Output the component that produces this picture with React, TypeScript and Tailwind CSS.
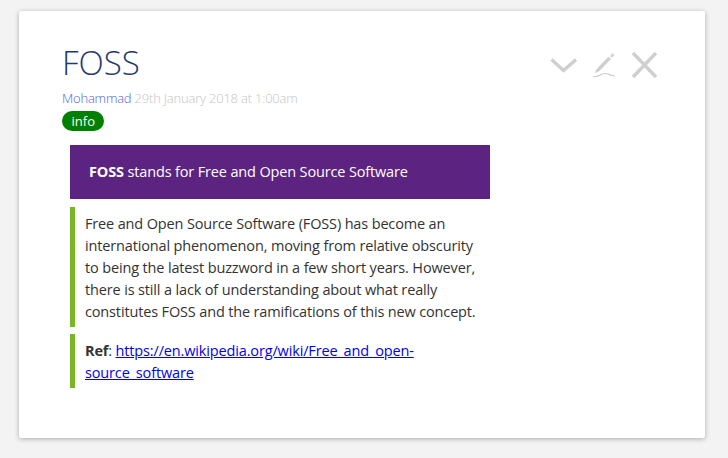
import React from 'react'

const font = { fontFamily: '"Open Sans", "Noto Sans", sans-serif' }

const Icons = () => (
  <div className="flex items-center">
    <svg width="28" height="28" viewBox="0 0 28 28" fill="none" stroke="#cfcfcf" strokeWidth="3.4">
      <path d="M2.5 8.5 L14.5 19.5 L27 8.5" />
    </svg>
    <svg className="ml-[14px]" width="24" height="28" viewBox="0 0 24 28" fill="none" stroke="#cfcfcf">
      <path d="M6 18 L4.5 21.5 L8 20 L19.5 8 L17.5 6 Z" fill="#cfcfcf" strokeWidth="0.8" />
      <path d="M19.5 5 L21.5 2.5 L23 4 L21 6.5 Z" fill="#cfcfcf" strokeWidth="0.5" />
      <path d="M2 25.5 C6 27 9 23 14 22.5 C18 22.2 19 25 24 25" strokeWidth="1.2" />
    </svg>
    <svg className="ml-[16px]" width="27" height="28" viewBox="0 0 27 28" fill="none" stroke="#cfcfcf" strokeWidth="3.4">
      <path d="M2 2 L25 26 M25 2 L2 26" />
    </svg>
  </div>
)

export default function App() {
  return (
    <div className="h-[458px] w-[728px] overflow-hidden bg-[#f3f3f3] pt-[11px] pl-[19px]" style={font}>
      <div className="relative h-[427px] w-[686px] rounded-[2px] bg-white pl-[43px] pt-[29px] shadow-[0_1px_5px_rgba(0,0,0,0.3)]">
        <div className="absolute right-[47px] top-[40px]">
          <Icons />
        </div>
        <h1 className="text-[33px] font-light leading-[46px] text-[#1f3a6e]">FOSS</h1>
        <div className="mt-[3px] text-[13px] font-light leading-[18px] tracking-[-0.2px] text-[#c4c4c4]">
          <span className="text-[#4f63d8]">Mohammad</span> 29th January 2018 at 1:00am
        </div>
        <div className="mt-[4px] flex">
          <span className="rounded-full bg-[#008000] px-[9.5px] text-[13px] leading-[20px] text-white">info</span>
        </div>
        <div className="ml-[8px] mt-[14px] w-[420px] text-[14.5px] tracking-[-0.15px] text-[#333]">
          <div className="flex h-[54px] items-center bg-[#5c2480] px-[19px] text-white">
            <p><strong className="font-bold">FOSS</strong> stands for Free and Open Source Software</p>
          </div>
          <div className="mt-[8px] border-l-[5px] border-[#7ab526] pl-[10px] pr-[10px] pt-[6px] pb-[4px] leading-[22px]">
            Free and Open Source Software (FOSS) has become an international phenomenon, moving from relative obscurity to being the latest buzzword in a few short years. However, there is still a lack of understanding about what really constitutes FOSS and the ramifications of this new concept.
          </div>
          <div className="mt-[7px] border-l-[5px] border-[#7ab526] pl-[10px] pr-[10px] pt-[6px] pb-[4px] leading-[22px]">
            <strong className="font-bold">Ref</strong>: <a href="#" className="text-[#0000ee] underline">https://en.wikipedia.org/wiki/Free_and_open-source_software</a>
          </div>
        </div>
      </div>
    </div>
  )
}
